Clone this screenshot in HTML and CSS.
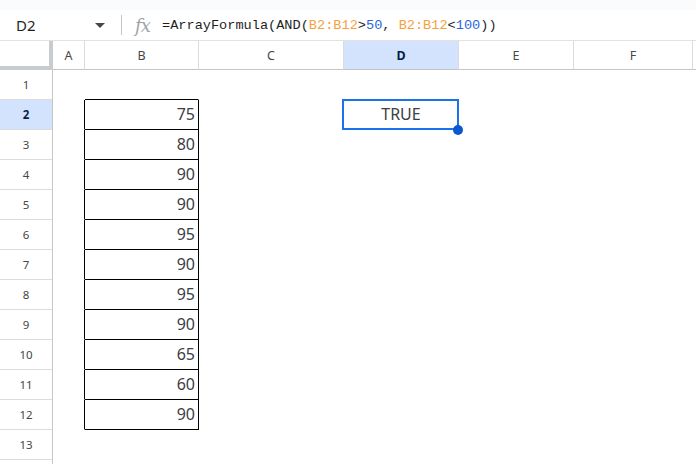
FILE: index.html
```html
<!DOCTYPE html>
<html>
<head>
<meta charset="utf-8">
<link rel="stylesheet" href="styles.css">
</head>
<body>
<div class="topstrip"></div>
<div class="fbar">
  <div class="namebox">
    <span class="cellref">D2</span>
    <svg class="caret" width="10" height="5" viewBox="0 0 10 5"><path d="M0 0 L10 0 L5 5 Z" fill="#444746"/></svg>
  </div>
  <div class="divider"></div>
  <span class="fx">fx</span>
  <div class="formula">=ArrayFormula(AND(<span class="rng">B2:B12</span>&gt;<span class="num">50</span>, <span class="rng">B2:B12</span>&lt;<span class="num">100</span>))</div>
</div>
<div class="sheet">
  <div class="corner"></div>
  <div class="ch">A</div>
  <div class="ch">B</div>
  <div class="ch">C</div>
  <div class="ch sel">D</div>
  <div class="ch">E</div>
  <div class="ch">F</div>
  <div class="ch last"></div>

  <div class="rh">1</div><div class="c"></div><div class="c bb"></div><div class="c"></div><div class="c"></div><div class="c"></div><div class="c"></div><div class="c"></div>
  <div class="rh sel">2</div><div class="c br"></div><div class="c bx num">75</div><div class="c"></div><div class="c d2">TRUE<div class="selbox"></div><div class="handle"></div></div><div class="c"></div><div class="c"></div><div class="c"></div>
  <div class="rh">3</div><div class="c br"></div><div class="c bx num">80</div><div class="c"></div><div class="c"></div><div class="c"></div><div class="c"></div><div class="c"></div>
  <div class="rh">4</div><div class="c br"></div><div class="c bx num">90</div><div class="c"></div><div class="c"></div><div class="c"></div><div class="c"></div><div class="c"></div>
  <div class="rh">5</div><div class="c br"></div><div class="c bx num">90</div><div class="c"></div><div class="c"></div><div class="c"></div><div class="c"></div><div class="c"></div>
  <div class="rh">6</div><div class="c br"></div><div class="c bx num">95</div><div class="c"></div><div class="c"></div><div class="c"></div><div class="c"></div><div class="c"></div>
  <div class="rh">7</div><div class="c br"></div><div class="c bx num">90</div><div class="c"></div><div class="c"></div><div class="c"></div><div class="c"></div><div class="c"></div>
  <div class="rh">8</div><div class="c br"></div><div class="c bx num">95</div><div class="c"></div><div class="c"></div><div class="c"></div><div class="c"></div><div class="c"></div>
  <div class="rh">9</div><div class="c br"></div><div class="c bx num">90</div><div class="c"></div><div class="c"></div><div class="c"></div><div class="c"></div><div class="c"></div>
  <div class="rh">10</div><div class="c br"></div><div class="c bx num">65</div><div class="c"></div><div class="c"></div><div class="c"></div><div class="c"></div><div class="c"></div>
  <div class="rh">11</div><div class="c br"></div><div class="c bx num">60</div><div class="c"></div><div class="c"></div><div class="c"></div><div class="c"></div><div class="c"></div>
  <div class="rh">12</div><div class="c br"></div><div class="c bx num">90</div><div class="c"></div><div class="c"></div><div class="c"></div><div class="c"></div><div class="c"></div>
  <div class="rh">13</div><div class="c"></div><div class="c"></div><div class="c"></div><div class="c"></div><div class="c"></div><div class="c"></div><div class="c"></div>
  <div class="rh stub"></div><div class="c"></div><div class="c"></div><div class="c"></div><div class="c"></div><div class="c"></div><div class="c"></div><div class="c"></div>
</div>
</body>
</html>
```
FILE: styles.css
```css
* { box-sizing: border-box; }
html, body { margin: 0; padding: 0; background: #ffffff; overflow: hidden; }
body { width: 696px; height: 464px; font-family: "Noto Sans", "Liberation Sans", sans-serif; color: #1f1f1f; }

.topstrip { height: 10px; background: #f9fbfd; }

.fbar {
  height: 31px;
  display: flex;
  align-items: center;
  border-bottom: 1px solid #e1e3e1;
  background: #ffffff;
}
.namebox {
  width: 121px;
  display: flex;
  align-items: center;
  justify-content: space-between;
  padding: 0 16px 0 16px;
}
.cellref { font-size: 15px; color: #1f1f1f; }
.caret { display: block; }
.divider { width: 1px; height: 20px; background: #c4c7c5; }
.fx {
  margin-left: 13px;
  width: 27px;
  font-family: "DejaVu Serif", "Liberation Serif", serif;
  font-style: italic;
  font-size: 18px;
  color: #a0a4a8;
  letter-spacing: -1px;
}
.formula {
  font-family: "Liberation Mono", "DejaVu Sans Mono", monospace;
  font-size: 13.6px;
  color: #1f1f1f;
  white-space: pre;
}
.rng { color: #f5a23c; }
.num { color: #2b66d9; }

.sheet {
  display: grid;
  grid-template-columns: 53px 32px 114px 145px 115px 115px 119px 1fr;
  grid-template-rows: 29px repeat(13, 30px) 4px;
}

.corner {
  border-right: 4px solid #c9cccf;
  border-bottom: 4px solid #c9cccf;
  background: #ffffff;
}
.ch {
  display: flex;
  align-items: center;
  justify-content: center;
  font-size: 12.5px;
  color: #444746;
  border-right: 1px solid #dadce0;
  border-bottom: 1px solid #c4c7c5;
  padding-top: 1px;
}
.ch.last { border-right: none; }
.ch.sel { background: #d3e3fd; color: #041e49; font-weight: bold; }

.rh {
  display: flex;
  align-items: center;
  justify-content: center;
  font-size: 11.5px;
  color: #444746;
  border-right: 1px solid #c4c7c5;
  border-bottom: 1px solid #dadce0;
}
.rh.stub { border-bottom: none; }
.rh.sel { background: #d3e3fd; color: #041e49; font-weight: bold; }

.c {
  border-right: 1px solid transparent;
  border-bottom: 1px solid transparent;
  font-size: 16px;
  color: #3c4043;
  display: flex;
  align-items: flex-end;
  padding-bottom: 4px;
}
.c.br { border-right-color: #000000; }
.c.bb { border-bottom-color: #000000; }
.c.bx { border-right-color: #000000; border-bottom-color: #000000; }
.c.num { justify-content: flex-end; padding-right: 3px; color: #3c4043; }
.c.d2 { position: relative; justify-content: center; }

.selbox {
  position: absolute;
  left: -2px;
  top: -1px;
  width: 117px;
  height: 31px;
  border: 2px solid #1a73e8;
}
.handle {
  position: absolute;
  left: 109px;
  top: 25px;
  width: 10px;
  height: 10px;
  border-radius: 50%;
  background: #0b57d0;
}
```
